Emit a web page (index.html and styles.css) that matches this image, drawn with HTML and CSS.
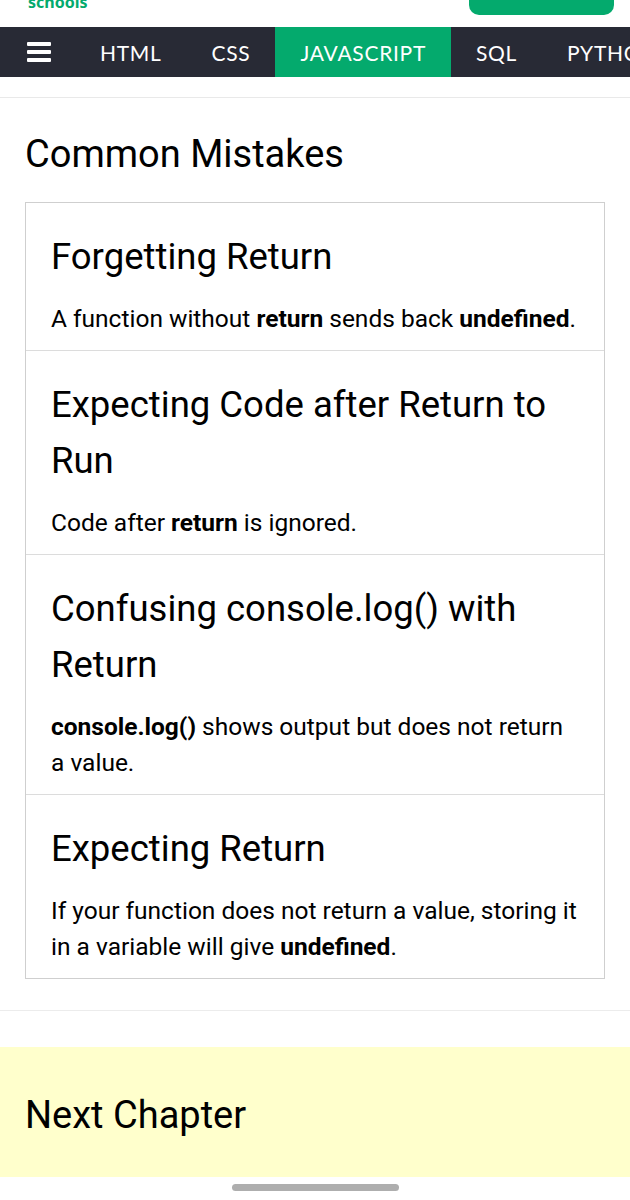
FILE: index.html
```html
<!DOCTYPE html>
<html lang="en">
<head>
<meta charset="utf-8">
<title>Common Mistakes</title>
<link rel="stylesheet" href="styles.css">
</head>
<body>
<header class="topbar">
  <div class="logo">schools</div>
  <div class="topbtn"></div>
</header>
<nav class="nav">
  <div class="burger" aria-label="menu">
    <span></span><span></span><span></span>
  </div>
  <a class="navlink">HTML</a>
  <a class="navlink">CSS</a>
  <a class="navlink active">JAVASCRIPT</a>
  <a class="navlink">SQL</a>
  <a class="navlink">PYTHON</a>
  <a class="navlink">JAVA</a>
</nav>
<div class="subbar"></div>
<main class="main">
  <h2 class="title">Common Mistakes</h2>
  <div class="box">
    <div class="item">
      <h3 class="item-title">Forgetting Return</h3>
      <p class="item-text">A function without <b>return</b> sends back <b>undefined</b>.</p>
    </div>
    <div class="item">
      <h3 class="item-title">Expecting Code after Return to Run</h3>
      <p class="item-text">Code after <b>return</b> is ignored.</p>
    </div>
    <div class="item">
      <h3 class="item-title">Confusing console.log() with Return</h3>
      <p class="item-text"><b>console.log()</b> shows output but does not return a value.</p>
    </div>
    <div class="item">
      <h3 class="item-title">Expecting Return</h3>
      <p class="item-text">If your function does not return a value, storing it in a variable will give <b>undefined</b>.</p>
    </div>
  </div>
</main>
<div class="divider"></div>
<section class="next">
  <h2 class="next-title">Next Chapter</h2>
</section>
<div class="home"><span class="home-bar"></span></div>
</body>
</html>
```
FILE: styles.css
```css
html, body {
  margin: 0;
  padding: 0;
  background: #fff;
}
body {
  font-family: Roboto, "Liberation Sans", Arial, sans-serif;
  color: #000;
  width: 630px;
  overflow: hidden;
}
.topbar {
  height: 27px;
  overflow: hidden;
  display: flex;
  justify-content: space-between;
  align-items: flex-start;
  padding: 0 16px 0 28px;
  box-sizing: border-box;
}
.logo {
  font-family: "Noto Sans", "Open Sans", sans-serif;
  font-weight: 700;
  font-size: 16px;
  line-height: 16px;
  color: #04AA6D;
  margin-top: -6px;
}
.topbtn {
  width: 145px;
  height: 40px;
  margin-top: -25px;
  border-radius: 10px;
  background: #04AA6D;
}
.nav {
  height: 50px;
  background: #282A35;
  display: flex;
  align-items: stretch;
  white-space: nowrap;
  overflow: hidden;
}
.burger {
  display: flex;
  flex-direction: column;
  justify-content: center;
  gap: 4.5px;
  padding: 0 24px 0 27px;
  flex: none;
}
.burger span {
  display: block;
  width: 24px;
  height: 3.5px;
  background: #fff;
  border-radius: 1px;
}
.navlink {
  display: flex;
  align-items: center;
  padding: 0 25px;
  color: #fff;
  font-family: Lato, "Noto Sans", sans-serif;
  font-size: 21px;
  letter-spacing: 0.7px;
  flex: none;
}
.navlink.active {
  background: #04AA6D;
}
.subbar {
  height: 20px;
  border-bottom: 1px solid #e9e9e9;
}
.main {
  padding: 0 25px;
}
.title {
  font-size: 38px;
  font-weight: 400;
  line-height: 57px;
  margin: 28px 0 19px;
}
.box {
  border: 1px solid #cfcfcf;
}
.item {
  padding: 26px 25px 13px;
}
.item + .item {
  border-top: 1px solid #dcdcdc;
}
.item-title {
  font-size: 36.5px;
  font-weight: 400;
  line-height: 56px;
  margin: 0 0 16px;
}
.item-text {
  font-size: 24.5px;
  line-height: 36px;
  margin: 0;
}
.item-text b {
  font-weight: 700;
}
.divider {
  margin-top: 31px;
  border-top: 1px solid #ececec;
  height: 36px;
}
.next {
  background: #FFFFCC;
  padding: 40px 25px 33px;
}
.next-title {
  font-size: 38px;
  font-weight: 400;
  line-height: 57px;
  margin: 0;
}
.home {
  display: flex;
  justify-content: center;
  padding-top: 7px;
}
.home-bar {
  display: block;
  width: 167px;
  height: 7px;
  border-radius: 4px;
  background: #aeaeae;
}
```
